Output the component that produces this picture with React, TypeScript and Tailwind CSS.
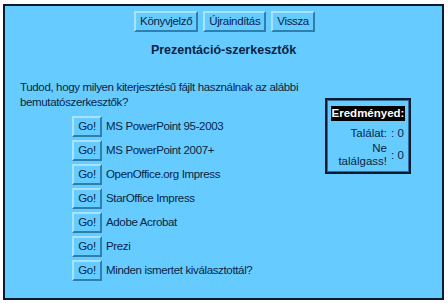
const items = [
  'MS PowerPoint 95-2003',
  'MS PowerPoint 2007+',
  'OpenOffice.org Impress',
  'StarOffice Impress',
  'Adobe Acrobat',
  'Prezi',
  'Minden ismertet kiválasztottál?',
];

function Btn({ children, className = '' }: { children: React.ReactNode; className?: string }) {
  return (
    <button
      className={`h-[21px] bg-[#66ccff] border-2 border-t-[#a8e4ff] border-l-[#a8e4ff] border-b-[#2f7fae] border-r-[#2f7fae] text-[11.5px] tracking-[-0.35px] leading-none text-[#0a1f44] ${className}`}
    >
      {children}
    </button>
  );
}

export default function App() {
  return (
    <div className="w-[448px] h-[303px] bg-white pt-[4px] pl-[3px] font-['Liberation_Sans',Arial,sans-serif] text-[#0a1f44]">
      <div className="w-[441px] h-[296px] bg-[#66ccff] border-2 border-[#0b1a33] flex flex-col">
        <div className="flex justify-center gap-[5px] mt-[5px] pl-[2px]">
          <Btn className="px-[4px]">Könyvjelző</Btn>
          <Btn className="px-[4px]">Újraindítás</Btn>
          <Btn className="px-[4px]">Vissza</Btn>
        </div>
        <h1 className="text-center font-bold text-[12.5px] leading-[16px] mt-[10px]">
          Prezentáció-szerkesztők
        </h1>
        <div className="flex mt-[22px] text-[11.5px] tracking-[-0.35px]">
          <div className="pl-[15px] w-[300px] shrink-0">
            <p className="leading-[15px] w-[285px]">
              Tudod, hogy milyen kiterjesztésű fájlt használnak az alábbi bemutatószerkesztők?
            </p>
            <ul className="mt-[6px] pl-[52px] flex flex-col gap-[3px]">
              {items.map((it) => (
                <li key={it} className="flex items-center gap-[4px]">
                  <Btn className="w-[30px]">Go!</Btn>
                  <span>{it}</span>
                </li>
              ))}
            </ul>
          </div>
          <div className="ml-[20px] mt-[18px] tracking-normal">
            <div className="w-[86px] h-[76px] border-2 border-[#0b1a33] bg-[#66ccff]">
              <div className="h-full border border-[#2f6f9e] px-[3px] pt-[5px]">
                <div className="bg-black text-white font-bold text-[11.5px] leading-[15px] text-center">
                  Eredményed:
                </div>
                <div className="flex justify-end items-center text-[11.5px] leading-[14px] mt-[5px]">
                  <span className="text-right">Találat:</span>
                  <span className="ml-[4px] w-[14px]">: 0</span>
                </div>
                <div className="flex justify-end items-center text-[11.5px] leading-[13px] mt-[2px]">
                  <span className="text-right">Ne<br />találgass!</span>
                  <span className="ml-[4px] w-[14px]">: 0</span>
                </div>
              </div>
            </div>
          </div>
        </div>
      </div>
    </div>
  );
}
